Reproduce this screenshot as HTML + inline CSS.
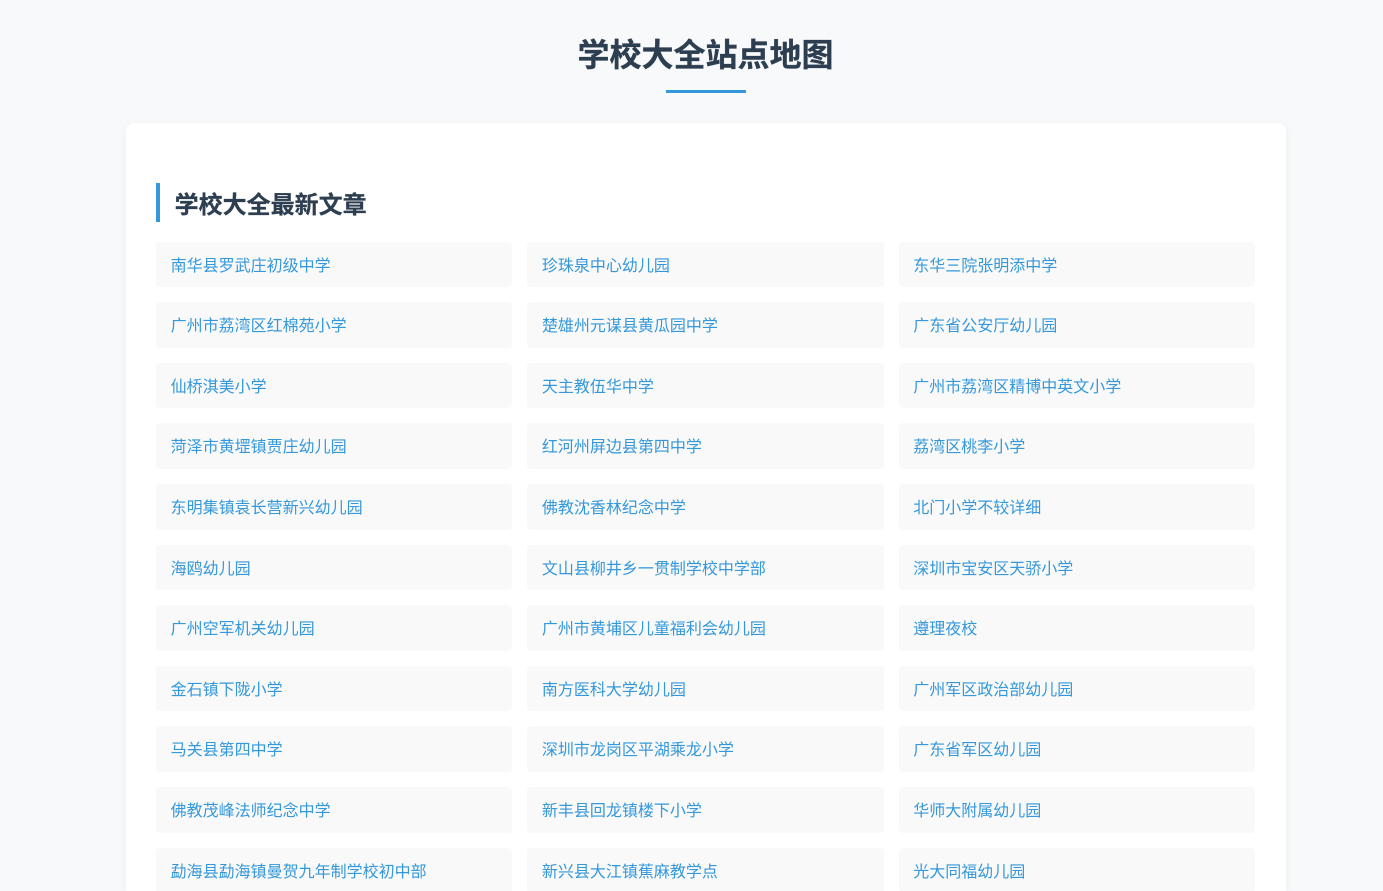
<!DOCTYPE html>
<html lang="zh-CN">
<head>
<meta charset="utf-8">
<title>学校大全站点地图</title>
<style>
*{box-sizing:border-box;margin:0;padding:0}
html,body{width:1383px;height:891px;overflow:hidden;background:#f8f9fa}
body{position:relative;font-family:"WenQuanYi Zen Hei","Noto Sans CJK SC",sans-serif;line-height:1.6;color:#333}
h1{position:absolute;left:125.5px;top:28px;width:1160px;text-align:center;font-size:32px;font-weight:bold;line-height:51.2px;color:#2c3e50;-webkit-text-stroke:.3px #2c3e50}
.rule{position:absolute;left:666px;top:90px;width:80px;height:3px;background:#3498db}
.card{position:absolute;left:126px;top:123px;width:1160px;height:768px;overflow:hidden;background:#fff;border-radius:8px 8px 0 0;box-shadow:0 2px 10px rgba(0,0,0,.05);padding:60px 31px 0 30px}
h2{font-size:24px;font-weight:bold;height:38.6px;line-height:40px;color:#2c3e50;border-left:4px solid #3498db;padding-left:14.6px;margin-bottom:20px;-webkit-text-stroke:.25px #2c3e50}
.grid{display:grid;grid-template-columns:repeat(3,1fr);gap:15px}
.grid a{display:block;height:45.6px;padding:10px 15px 10px 14.6px;background:#f9f9f9;border-radius:4px;color:#3498db;font-size:16px;line-height:25.6px;text-decoration:none;white-space:nowrap}
</style>
</head>
<body>
<h1>学校大全站点地图</h1>
<div class="rule"></div>
<div class="card">
<h2>学校大全最新文章</h2>
<div class="grid">
<a>南华县罗武庄初级中学</a><a>珍珠泉中心幼儿园</a><a>东华三院张明添中学</a>
<a>广州市荔湾区红棉苑小学</a><a>楚雄州元谋县黄瓜园中学</a><a>广东省公安厅幼儿园</a>
<a>仙桥淇美小学</a><a>天主教伍华中学</a><a>广州市荔湾区精博中英文小学</a>
<a>菏泽市黄堽镇贾庄幼儿园</a><a>红河州屏边县第四中学</a><a>荔湾区桃李小学</a>
<a>东明集镇袁长营新兴幼儿园</a><a>佛教沈香林纪念中学</a><a>北门小学不较详细</a>
<a>海鸥幼儿园</a><a>文山县柳井乡一贯制学校中学部</a><a>深圳市宝安区天骄小学</a>
<a>广州空军机关幼儿园</a><a>广州市黄埔区儿童福利会幼儿园</a><a>遵理夜校</a>
<a>金石镇下陇小学</a><a>南方医科大学幼儿园</a><a>广州军区政治部幼儿园</a>
<a>马关县第四中学</a><a>深圳市龙岗区平湖乘龙小学</a><a>广东省军区幼儿园</a>
<a>佛教茂峰法师纪念中学</a><a>新丰县回龙镇楼下小学</a><a>华师大附属幼儿园</a>
<a>勐海县勐海镇曼贺九年制学校初中部</a><a>新兴县大江镇蕉麻教学点</a><a>光大同福幼儿园</a>
</div>
</div>
</body>
</html>
